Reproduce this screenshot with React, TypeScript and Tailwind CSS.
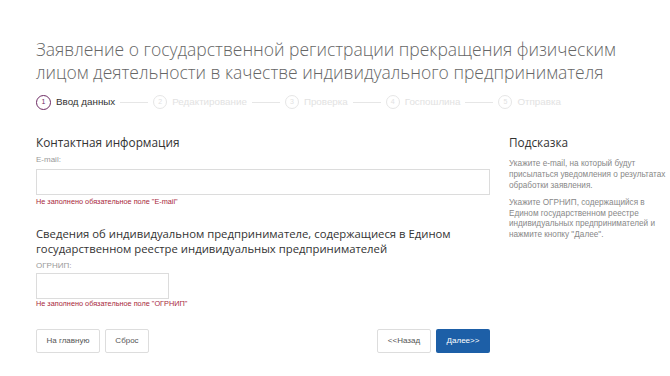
import React from "react";

const steps = ["Редактирование", "Проверка", "Госпошлина", "Отправка"];

export default function App() {
  return (
    <div className="w-[670px] h-[376px] bg-white overflow-hidden" style={{ fontFamily: "'Liberation Sans', Arial, sans-serif" }}>
      <div className="pl-[36px] pt-[38px]">
        <h1 className="text-[17.5px] leading-[23px] font-light text-[#666] whitespace-nowrap" style={{ fontFamily: "'Open Sans', sans-serif" }}>
          Заявление о государственной регистрации прекращения физическим
          <br />
          лицом деятельности в качестве индивидуального предпринимателя
        </h1>
        <div className="flex items-center mt-[10px] h-[16px] text-[9.8px] whitespace-nowrap">
          <div className="flex items-center">
            <span className="w-[15px] h-[15px] rounded-full border-[1.5px] border-[#6d2a63] flex items-center justify-center text-[7px] text-[#6d2a63]">1</span>
            <span className="ml-[5px] text-[#333]">Ввод данных</span>
          </div>
          {steps.map((s, i) => (
            <div key={s} className="flex items-center text-[#e2e2e2]">
              <span className="w-[28px] h-px bg-[#e6e6e6] mx-[5px]" />
              <span className="w-[14px] h-[14px] rounded-full border border-[#e6e6e6] flex items-center justify-center text-[7px]">{i + 2}</span>
              <span className="ml-[5px]">{s}</span>
            </div>
          ))}
        </div>
        <div className="flex mt-[24px]">
          <div className="w-[454px] shrink-0">
            <h2 className="text-[11.8px] leading-[16px] text-[#333]" style={{ fontFamily: "'Open Sans', sans-serif" }}>Контактная информация</h2>
            <div className="text-[8px] text-[#999] mt-[5px] leading-[10px]">E-mail:</div>
            <div className="mt-[4px] h-[26px] border border-[#dcdcdc]" />
            <div className="text-[7.3px] text-[#a8283c] mt-[2px] leading-[9px]">Не заполнено обязательное поле "E-mail"</div>
            <h2 className="mt-[20px] text-[11.3px] leading-[15px] text-[#333] whitespace-nowrap" style={{ fontFamily: "'Open Sans', sans-serif" }}>
              Сведения об индивидуальном предпринимателе, содержащиеся в Едином
              <br />
              государственном реестре индивидуальных предпринимателей
            </h2>
            <div className="text-[8px] text-[#999] mt-[5px] leading-[10px]">ОГРНИП:</div>
            <div className="mt-[2px] h-[26px] w-[133px] border border-[#dcdcdc]" />
            <div className="text-[7.3px] text-[#a8283c] mt-0 leading-[9px]">Не заполнено обязательное поле "ОГРНИП"</div>
            <div className="flex justify-between mt-[21px] text-[8px]">
              <div className="flex gap-[5px]">
                <button className="h-[24px] w-[64px] border border-[#ddd] rounded-[2px] text-[#555]">На главную</button>
                <button className="h-[24px] w-[44px] border border-[#ddd] rounded-[2px] text-[#555]">Сброс</button>
              </div>
              <div className="flex gap-[5px]">
                <button className="h-[24px] w-[54px] border border-[#ddd] rounded-[2px] text-[#555]">&lt;&lt;Назад</button>
                <button className="h-[24px] w-[54px] bg-[#1d5fa7] rounded-[2px] text-white">Далее&gt;&gt;</button>
              </div>
            </div>
          </div>
          <div className="ml-[19px] w-[161px] shrink-0">
            <h2 className="text-[11.8px] leading-[16px] text-[#333]" style={{ fontFamily: "'Open Sans', sans-serif" }}>Подсказка</h2>
            <p className="mt-[8px] text-[8.2px] leading-[11px] text-[#888] whitespace-nowrap">
              Укажите e-mail, на который будут
              <br />
              присылаться уведомления о результатах
              <br />
              обработки заявления.
            </p>
            <p className="mt-[7px] text-[8.2px] leading-[10.7px] text-[#888] whitespace-nowrap">
              Укажите ОГРНИП, содержащийся в
              <br />
              Едином государственном реестре
              <br />
              индивидуальных предпринимателей и
              <br />
              нажмите кнопку "Далее".
            </p>
          </div>
        </div>
      </div>
    </div>
  );
}
